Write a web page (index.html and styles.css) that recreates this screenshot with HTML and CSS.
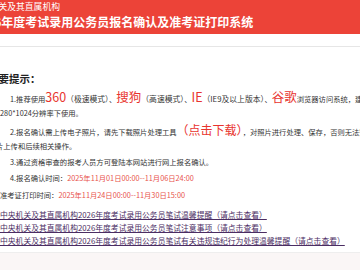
FILE: index.html
```html
<!DOCTYPE html>
<html lang="zh-CN">
<head>
  <meta charset="UTF-8">
  <meta name="viewport" content="width=device-width, initial-scale=1.0">
  <title>报名确认及准考证打印系统</title>
  <link rel="stylesheet" href="styles.css">
</head>
<body>
<div class="top">
  <div class="org">中央机关及其直属机构</div>
  <div class="title">2026年度考试录用公务员报名确认及准考证打印系统</div>
</div>
<div class="nav"></div>
<div class="main">
  <div class="tip-head">重要提示：</div>
  <div class="tips">
    <div class="line first">1.推荐使用<span class="big">360</span><span class="note">（极速模式）</span>、<span class="big">搜狗</span><span class="note">（高速模式）</span>、<span class="big">IE</span><span class="note">（IE9及以上版本）</span>、<span class="big">谷歌</span>浏览器访问系统，建议在</div>
    <div class="line">1280*1024分辨率下使用。</div>
    <div class="line first">2.报名确认需上传电子照片，请先下载照片处理工具<span class="mid">（点击下载）</span>，对照片进行处理、保存，否则无法完成照</div>
    <div class="line">片上传和后续相关操作。</div>
    <div class="line first">3.通过资格审查的报考人员方可登陆本网站进行网上报名确认。</div>
    <div class="line first">4.报名确认时间：<span class="date">2025年11月01日00:00--11月06日24:00</span></div>
    <div class="line second">准考证打印时间：<span class="date">2025年11月24日00:00--11月30日15:00</span></div>
  </div>
  <div class="news">
    <a href="#">中央机关及其直属机构2026年度考试录用公务员笔试温馨提醒（请点击查看）</a>
    <a href="#">中央机关及其直属机构2026年度考试录用公务员笔试注意事项（请点击查看）</a>
    <a href="#">中央机关及其直属机构2026年度考试录用公务员笔试有关违规违纪行为处理温馨提醒（请点击查看）</a>
  </div>
</div>
<div class="foot"></div>
</body>
</html>
```

FILE: styles.css
```css
*{
  padding: 0;
  margin: 0;
  box-sizing: border-box;
}
body{
  background-color: #fff;
  font-family: "Noto Sans CJK SC", "Noto Sans", sans-serif;
  color: #333;
  overflow: hidden;
}
.top{
  height: 34px;
  background-color: #ec4338;
  color: #fff;
  padding-top: 1px;
  white-space: nowrap;
}
.org{
  margin-left: -28px;
  font-size: 8.8px;
  line-height: 12px;
}
.title{
  margin-left: -27px;
  font-size: 12px;
  font-weight: bold;
  line-height: 17px;
}
.nav{
  height: 13px;
  border-bottom: 1px solid #e6e6e6;
}
.main{
  padding-top: 24px;
  white-space: nowrap;
}
.tip-head{
  margin-left: -12px;
  font-size: 10.5px;
  font-weight: bold;
  line-height: 16px;
  color: #222;
}
.tips{
  margin-top: 2px;
  margin-left: -4px;
  font-size: 7.3px;
}
.line{
  height: 16.3px;
  line-height: 16.3px;
}
.line.first{
  padding-left: 14px;
}
.line.second{
  padding-left: 4px;
}
.big{
  font-size: 12.5px;
  color: #e8342e;
}
.note{
  font-size: 7.8px;
}
.mid{
  font-size: 12px;
  color: #e8342e;
}
.date{
  color: #e8524c;
}
.news{
  margin-top: 5px;
  padding-bottom: 5px;
  border-bottom: 1px solid #eee;
}
.news a{
  display: block;
  font-size: 7.8px;
  line-height: 13px;
  color: #4b2d63;
}
.foot{
  height: 30px;
  background-color: #faf6f6;
}
```
